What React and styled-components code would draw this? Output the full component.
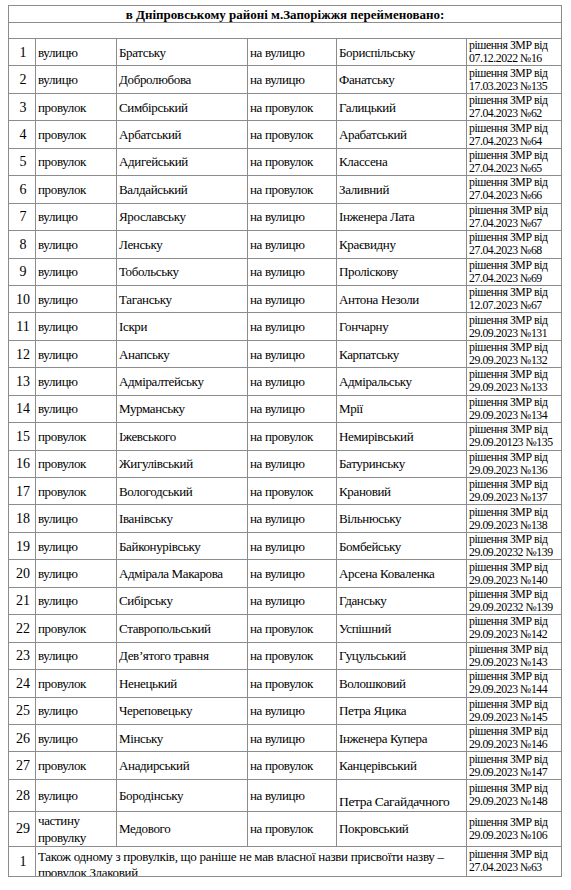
import React from "react";
import styled, { createGlobalStyle } from "styled-components";

const GlobalStyle = createGlobalStyle`
  html, body {
    margin: 0;
    padding: 0;
    background: #ffffff;
  }
  body {
    padding: 5px 0 0 8px;
    font-family: "Liberation Serif", "Times New Roman", serif;
    color: #000;
  }
`;

const Table = styled.table`
  border-collapse: collapse;
  table-layout: fixed;
  width: 554px;
  font-family: "Liberation Serif", "Times New Roman", serif;
  font-size: 13px;
  line-height: 15px;
  color: #000;
`;

const Cell = styled.td`
  border: 1px solid #8c8c8c;
  padding: 0 0 0 2px;
  vertical-align: ${(p) => p.$valign || "middle"};
  text-align: ${(p) => (p.$center ? "center" : "left")};
  font-family: "Liberation Serif", "Times New Roman", serif;
  font-size: ${(p) => p.$size || "13px"};
  letter-spacing: ${(p) => (p.$center ? "0" : "-0.35px")};
  line-height: ${(p) => p.$lh || "15px"};
  overflow: hidden;
  white-space: nowrap;
`;

const HeadCell = styled.td`
  border: 1px solid #8c8c8c;
  padding: 0;
  height: 16px;
  text-align: center;
  font-family: "Liberation Serif", "Times New Roman", serif;
  font-weight: bold;
  font-size: 13px;
  line-height: 15px;
`;

const BlankCell = styled.td`
  border: 1px solid #8c8c8c;
  height: 15px;
  padding: 0;
`;

const Row = styled.tr`
  height: ${(p) => p.$h || "27.45px"};
`;

const Decision = styled.div`
  font-size: 11.8px;
  letter-spacing: -0.45px;
  line-height: 13px;
  white-space: nowrap;
`;

const Clip = styled.div`
  height: 27px;
  overflow: hidden;
  font-size: 13px;
  letter-spacing: -0.3px;
  line-height: 16px;
  padding-top: 2px;
  white-space: normal;
`;

const rows = [
  ["1", "вулицю", "Братську", "на вулицю", "Бориспільську", "07.12.2022 №16"],
  ["2", "вулицю", "Добролюбова", "на вулицю", "Фанатську", "17.03.2023 №135"],
  ["3", "провулок", "Симбірський", "на провулок", "Галицький", "27.04.2023 №62"],
  ["4", "провулок", "Арбатський", "на провулок", "Арабатський", "27.04.2023 №64"],
  ["5", "провулок", "Адигейський", "на провулок", "Классена", "27.04.2023 №65"],
  ["6", "провулок", "Валдайський", "на провулок", "Заливний", "27.04.2023 №66"],
  ["7", "вулицю", "Ярославську", "на вулицю", "Інженера Лата", "27.04.2023 №67"],
  ["8", "вулицю", "Ленську", "на вулицю", "Краєвидну", "27.04.2023 №68"],
  ["9", "вулицю", "Тобольську", "на вулицю", "Пролiскову", "27.04.2023 №69"],
  ["10", "вулицю", "Таганську", "на вулицю", "Антона Незоли", "12.07.2023 №67"],
  ["11", "вулицю", "Іскри", "на вулицю", "Гончарну", "29.09.2023 №131"],
  ["12", "вулицю", "Анапську", "на вулицю", "Карпатську", "29.09.2023 №132"],
  ["13", "вулицю", "Адміралтейську", "на вулицю", "Адміральську", "29.09.2023 №133"],
  ["14", "вулицю", "Мурманську", "на вулицю", "Мрії", "29.09.2023 №134"],
  ["15", "провулок", "Іжевського", "на провулок", "Немирівський", "29.09.20123 №135"],
  ["16", "провулок", "Жигулівський", "на вулицю", "Батуринську", "29.09.2023 №136"],
  ["17", "провулок", "Вологодський", "на провулок", "Крановий", "29.09.2023 №137"],
  ["18", "вулицю", "Іванівську", "на вулицю", "Вільнюську", "29.09.2023 №138"],
  ["19", "вулицю", "Байконурівську", "на вулицю", "Бомбейську", "29.09.20232 №139"],
  ["20", "вулицю", "Адмірала Макарова", "на вулицю", "Арсена Коваленка", "29.09.2023 №140"],
  ["21", "вулицю", "Сибірську", "на вулицю", "Гданську", "29.09.20232 №139"],
  ["22", "провулок", "Ставропольський", "на провулок", "Успішний", "29.09.2023 №142"],
  ["23", "вулицю", "Дев’ятого травня", "на провулок", "Гуцульський", "29.09.2023 №143"],
  ["24", "провулок", "Ненецький", "на провулок", "Волошковий", "29.09.2023 №144"],
  ["25", "вулицю", "Череповецьку", "на вулицю", "Петра Яцика", "29.09.2023 №145"],
  ["26", "вулицю", "Мінську", "на вулицю", "Інженера Купера", "29.09.2023 №146"],
  ["27", "провулок", "Анадирський", "на провулок", "Канцерівський", "29.09.2023 №147"],
];

const DecisionText = ({ text }) => (
  <Decision>
    рішення ЗМР від
    <br />
    {text}
  </Decision>
);

export default function App() {
  return (
    <>
      <GlobalStyle />
      <Table>
        <colgroup>
          <col style={{ width: 27 }} />
          <col style={{ width: 81 }} />
          <col style={{ width: 131 }} />
          <col style={{ width: 89 }} />
          <col style={{ width: 130 }} />
          <col style={{ width: 95 }} />
        </colgroup>
        <tbody>
          <tr>
            <HeadCell colSpan={6}>
              в Дніпровському районі м.Запоріжжя перейменовано:
            </HeadCell>
          </tr>
          <tr>
            <BlankCell colSpan={6} />
          </tr>
          {rows.map((r) => (
            <Row key={r[0]}>
              <Cell $center $size="14px">{r[0]}</Cell>
              <Cell>{r[1]}</Cell>
              <Cell>{r[2]}</Cell>
              <Cell>{r[3]}</Cell>
              <Cell>{r[4]}</Cell>
              <Cell>
                <DecisionText text={r[5]} />
              </Cell>
            </Row>
          ))}
          <Row $h="32px">
            <Cell $center $size="14px">28</Cell>
            <Cell>вулицю</Cell>
            <Cell>Бородінську</Cell>
            <Cell>на вулицю</Cell>
            <Cell $valign="bottom" $size="13.5px" $lh="18px">
              Петра Сагайдачного
            </Cell>
            <Cell>
              <DecisionText text="29.09.2023 №148" />
            </Cell>
          </Row>
          <Row $h="35px">
            <Cell $center $size="14px">29</Cell>
            <Cell $lh="17px">
              частину
              <br />
              провулку
            </Cell>
            <Cell>Медового</Cell>
            <Cell>на провулок</Cell>
            <Cell>Покровський</Cell>
            <Cell>
              <DecisionText text="29.09.2023 №106" />
            </Cell>
          </Row>
          <Row $h="29px">
            <Cell $center $size="14px">1</Cell>
            <Cell colSpan={4} $valign="top">
              <Clip>
                Також одному з провулків, що раніше не мав власної назви
                присвоїти назву – провулок Злаковий
              </Clip>
            </Cell>
            <Cell>
              <DecisionText text="27.04.2023 №63" />
            </Cell>
          </Row>
        </tbody>
      </Table>
    </>
  );
}
